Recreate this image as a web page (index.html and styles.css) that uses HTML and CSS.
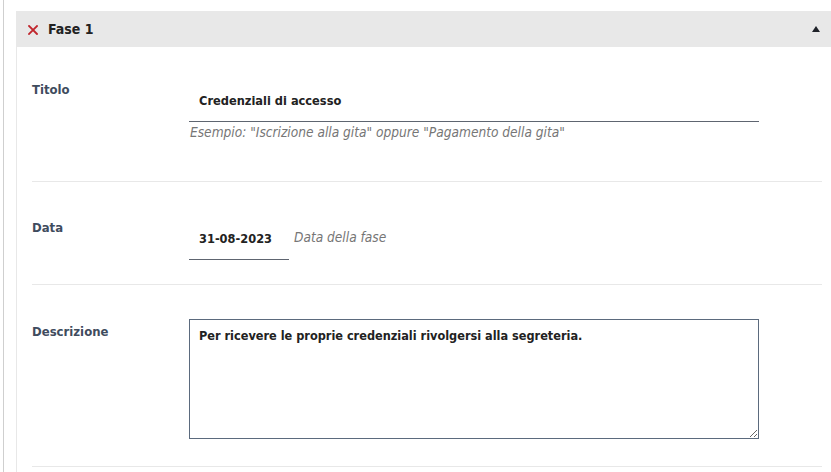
FILE: index.html
```html
<!DOCTYPE html>
<html lang="it">
<head>
<meta charset="utf-8">
<title>Fase 1</title>
<link rel="stylesheet" href="styles.css">
</head>
<body>
<div class="frame">
  <section class="panel">
    <header class="panel-head">
      <svg class="remove-icon" width="10" height="10" viewBox="0 0 10 10" aria-hidden="true">
        <path d="M1 1 L9 9 M9 1 L1 9" stroke="#c0262d" stroke-width="1.8" stroke-linecap="square" fill="none"/>
      </svg>
      <span class="panel-title">Fase 1</span>
      <svg class="toggle-icon" width="8" height="6" viewBox="0 0 8 6" aria-hidden="true">
        <polygon points="4,0 8,6 0,6" fill="#1f2229"/>
      </svg>
    </header>
    <div class="panel-body">
      <div class="row row-title">
        <label class="lbl" for="titolo">Titolo</label>
        <div class="field">
          <input id="titolo" class="line-input wide" type="text" value="Credenziali di accesso">
          <p class="hint">Esempio: "Iscrizione alla gita" oppure "Pagamento della gita"</p>
        </div>
      </div>
      <div class="row row-date">
        <label class="lbl" for="data">Data</label>
        <div class="field inline">
          <input id="data" class="line-input short" type="text" value="31-08-2023">
          <span class="hint side">Data della fase</span>
        </div>
      </div>
      <div class="row row-desc">
        <label class="lbl" for="descr">Descrizione</label>
        <div class="field">
          <textarea id="descr" class="area">Per ricevere le proprie credenziali rivolgersi alla segreteria.</textarea>
        </div>
      </div>
    </div>
  </section>
</div>
</body>
</html>
```

FILE: styles.css
```css
html, body {
  margin: 0;
  padding: 0;
  background: #ffffff;
  overflow: hidden;
}
body {
  font-family: "DejaVu Sans Condensed", "DejaVu Sans", sans-serif;
  font-size: 13px;
  color: #222;
}
.frame {
  margin-left: 3px;
  border-left: 1px solid #cfcfcf;
  padding: 11px 0 0 12px;
  height: 461px;
}
.panel {
  border-left: 1px solid #e8e8e8;
  height: 100%;
  overflow: hidden;
}
.panel-head {
  display: flex;
  align-items: center;
  height: 36px;
  background: #e8e8e8;
  padding: 0 10px 0 11px;
}
.remove-icon {
  flex: none;
  margin-top: 1px;
}
.panel-title {
  margin-left: 10px;
  font-weight: bold;
  font-size: 14px;
  color: #222;
  flex: 1;
}
.toggle-icon {
  flex: none;
  margin-right: 1px;
}
.panel-body {
  padding: 0 9px 0 15px;
}
.row {
  display: grid;
  grid-template-columns: 157px 1fr;
  align-items: start;
  border-bottom: 1px solid #e8e8e8;
}
.lbl {
  font-weight: bold;
  color: #3f4c5e;
  line-height: 18px;
}
.line-input {
  display: block;
  box-sizing: border-box;
  height: 40px;
  border: 0;
  border-bottom: 1px solid #5e6570;
  padding: 0 10px 3px;
  font: bold 12.7px "DejaVu Sans Condensed", "DejaVu Sans", sans-serif;
  color: #222;
  background: transparent;
  outline: none;
}
.line-input.wide { width: 570px; }
.line-input.short { width: 100px; }
.hint {
  margin: 0;
  font-style: italic;
  font-size: 13.6px;
  color: #767676;
  line-height: 18px;
}
.row-title { padding: 34px 0 40px; }
.row-title .line-input { margin-top: 1px; }
.row-title .hint { margin: 1px 0 0 1px; }
.row-date { padding: 37px 0 24px; }
.row-date .field.inline {
  display: flex;
  align-items: center;
  margin-top: 1px;
}
.row-date .hint.side { margin: 0 0 7px 5px; }
.row-desc { padding: 34px 0 27px; }
.row-desc .lbl { margin-top: 4px; }
.area {
  display: block;
  box-sizing: border-box;
  width: 570px;
  height: 120px;
  border: 1px solid #5b6a7d;
  padding: 8px 9px;
  font: bold 12.6px "DejaVu Sans Condensed", "DejaVu Sans", sans-serif;
  color: #222;
  resize: both;
  outline: none;
}
```
